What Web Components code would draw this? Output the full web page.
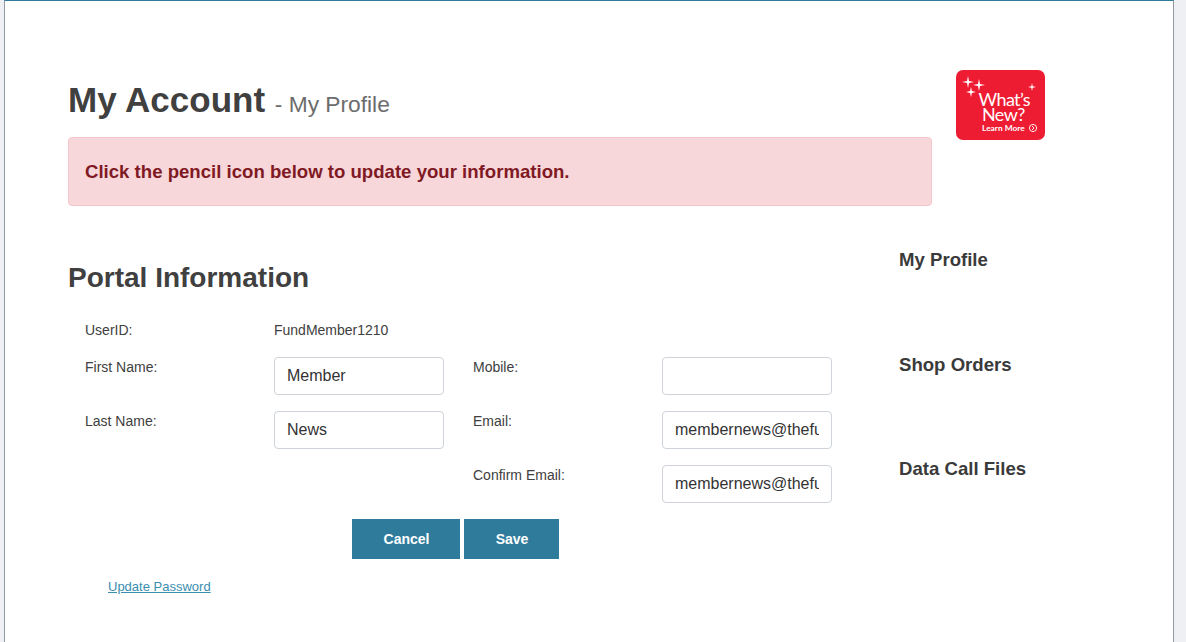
<!DOCTYPE html>
<html><head><meta charset="utf-8"><title>My Account</title>
<style>
html,body{margin:0;height:100%;background:#eef0f3;overflow:hidden}
body{font-family:"Liberation Sans",Arial,sans-serif;color:#404040}
</style></head><body>
<x-shell>
  <x-header slot="top"></x-header>
  <x-portal-form slot="main"></x-portal-form>
  <x-side-nav slot="side">
    <x-nav-item style="--gap:0">My Profile</x-nav-item>
    <x-nav-item style="--gap:84px">Shop Orders</x-nav-item>
    <x-nav-item style="--gap:83px">Data Call Files</x-nav-item>
  </x-side-nav>
</x-shell>
<script>
function def(name, html, init){
  customElements.define(name, class extends HTMLElement{
    constructor(){super();this.attachShadow({mode:'open'}).innerHTML=html;}
    connectedCallback(){ if(init) init.call(this,this.shadowRoot); }
  });
}
def('x-shell',`<style>
:host{display:block;box-sizing:border-box;width:1170px;height:642px;margin-left:4px;background:#fff;
 border-left:1px solid #8f9aa6;border-right:1px solid #8f9aa6;border-top:1px solid #2f7b9b}
.top{padding:69px 0 0 63px}
.row{display:flex;padding:39px 0 0 63px}
.main{width:830px;flex:none;padding-top:17px}
.side{padding-top:4px}
</style>
<div class="top"><slot name="top"></slot></div>
<div class="row"><div class="main"><slot name="main"></slot></div><div class="side"><slot name="side"></slot></div></div>`);

def('x-header',`<style>
:host{display:flex;align-items:flex-start}
.l{width:864px;flex:none}
h1{margin:0;height:67px;padding-top:8px;box-sizing:border-box;font-size:35px;line-height:44px;font-weight:700;color:#404040}
h1 small{font-size:22.75px;font-weight:400;color:#6c6c6c}
.alert{box-sizing:border-box;height:69px;display:flex;align-items:center;padding:0 16px;background:#f8d7da;border:1px solid #f3c6cb;border-radius:4px;
 font-size:18.6px;font-weight:700;color:#7f1a24}
svg{display:block;margin-left:24px}
</style>
<div class="l"><h1>My Account <small>- My Profile</small></h1><div class="alert">Click the pencil icon below to update your information.</div></div>
<svg width="89" height="70" viewBox="0 0 89 70">
 <rect width="89" height="70" rx="7" fill="#ee1c32"/>
 <g fill="#fff">
  <path d="M12 6l1 5 5 1-5 1-1 5-1-5-5-1 5-1z"/>
  <path d="M23 9l1 5 5 1-5 1-1 5-1-5-5-1 5-1z"/>
  <path d="M15 17l.9 4.100 4.100.9-4.100.9-.9 4.100-.9-4.100-4.100-.9 4.100-.9z"/>
  <path d="M76 13l.7 3.300 3.300.7-3.300.7-.7 3.300-.7-3.300-3.300-.7 3.300-.7z"/>
  <text x="22.500" y="35.500" font-family="Lato,'Liberation Sans',sans-serif" font-size="18" letter-spacing="-.6">What’s</text>
  <text x="26" y="50.500" font-family="Lato,'Liberation Sans',sans-serif" font-size="18" letter-spacing="-.6">New?</text>
  <text x="26" y="61" font-family="Lato,'Liberation Sans',sans-serif" font-size="8.400" font-weight="700">Learn More</text>
 </g>
 <circle cx="77" cy="58" r="3.600" fill="none" stroke="#fff" stroke-width=".9"/>
 <path d="M76 56l2 2-2 2" fill="none" stroke="#fff" stroke-width=".9"/>
</svg>`);

def('x-portal-form',`<style>
:host{display:block}
h2{margin:0;font-size:28px;line-height:32px;font-weight:700;color:#404040}
.grid{display:grid;grid-template-columns:189px 199px 189px 170px;grid-auto-rows:38px;row-gap:16px;margin:22px 0 0 17px;font-size:14px;color:#404040}
.uid{display:grid;grid-template-columns:189px auto;height:22px;align-items:center}
.wrap{margin-left:17px}
label{padding-top:2px;line-height:16px}
.acts{display:flex;gap:4px;margin:16px 0 0 284px}
button{width:108px;height:40px;border:0;padding:0 0 0 1px;background:#2f7b9b;color:#fff;font:700 14px "Liberation Sans",Arial,sans-serif}
button+button{width:95px}
a{display:inline-block;margin:20px 0 0 40px;font-size:13px;line-height:16px;color:#3a8eb0;text-decoration:underline}
</style>
<h2>Portal Information</h2>
<div class="wrap" style="margin-top:25px;font-size:14px"><div class="uid"><span>UserID:</span><span>FundMember1210</span></div></div>
<div class="grid" style="margin-top:16px">
 <label>First Name:</label><x-field value="Member"></x-field>
 <label>Mobile:</label><x-field value=""></x-field>
 <label>Last Name:</label><x-field value="News"></x-field>
 <label>Email:</label><x-field value="membernews@thefundingportal.com"></x-field>
 <span></span><span></span>
 <label>Confirm Email:</label><x-field value="membernews@thefundingportal.com"></x-field>
</div>
<div class="acts"><button>Cancel</button><button>Save</button></div>
<a href="#">Update Password</a>`);

def('x-field',`<style>
:host{display:block;width:170px;height:38px}
input{box-sizing:border-box;width:170px;height:38px;padding:0 12px;border:1px solid #ced4da;border-radius:4px;background:#fff;
 font:16px "Liberation Sans",Arial,sans-serif;color:#333;outline:0}
</style><input>`, function(r){ r.querySelector('input').value=this.getAttribute('value')||''; });

def('x-side-nav',`<style>:host{display:block;margin-left:1px}</style><slot></slot>`);
def('x-nav-item',`<style>
:host{display:block;margin-top:var(--gap,0);font-size:18.6px;line-height:21px;font-weight:700;color:#3a3a3a}
</style><slot></slot>`);
</script>
</body></html>
